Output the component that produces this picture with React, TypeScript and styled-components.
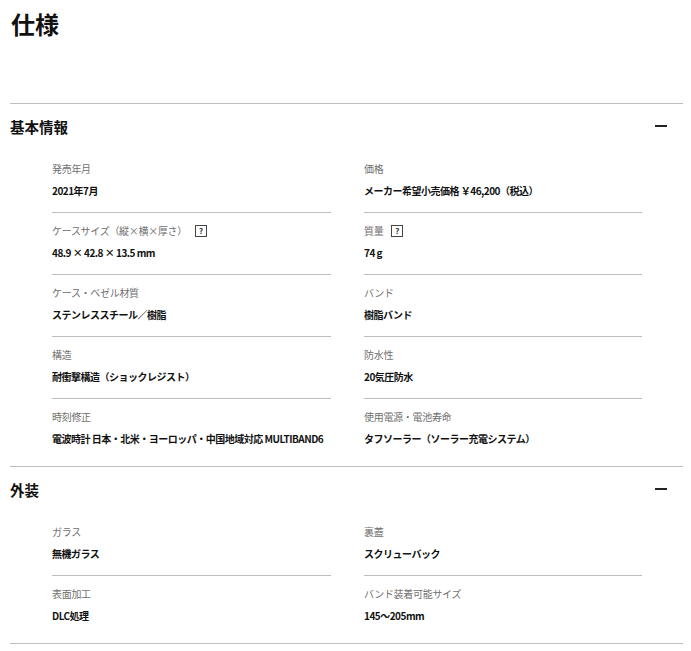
import React from "react";
import styled, { createGlobalStyle } from "styled-components";

const GlobalStyle = createGlobalStyle`
  html, body {
    margin: 0;
    padding: 0;
    background: #ffffff;
  }
  body {
    font-family: "Noto Sans CJK JP", "Noto Sans", sans-serif;
    color: #111;
  }
`;

const Page = styled.div`
  padding: 0 8px 0 10px;
`;

const Title = styled.h1`
  margin: 0 0 61px 1px;
  padding-top: 6px;
  font-size: 24px;
  line-height: 36px;
  font-weight: 700;
  color: #111;
`;

const Section = styled.section<{ $last?: boolean }>`
  border-top: 1px solid #bdbdbd;
  border-bottom: ${(p) => (p.$last ? "1px solid #bdbdbd" : "none")};
`;

const SectionHeader = styled.div`
  height: 47px;
  display: flex;
  align-items: center;
  justify-content: space-between;
  padding-right: 16px;
`;

const SectionTitle = styled.h2`
  margin: 0 0 2px;
  font-size: 14.5px;
  line-height: 20px;
  font-weight: 700;
  color: #111;
`;

const Minus = styled.span`
  display: block;
  width: 12px;
  height: 2px;
  margin-bottom: 3px;
  background: #222;
`;

const Grid = styled.div`
  display: grid;
  grid-template-columns: 279px 278px;
  column-gap: 33px;
  padding: 0 41px 5px 42px;
`;

const Item = styled.div<{ $last?: boolean }>`
  padding: 10px 0 13px;
  border-bottom: ${(p) => (p.$last ? "1px solid transparent" : "1px solid #bdbdbd")};
`;

const Label = styled.div`
  display: flex;
  align-items: center;
  font-size: 10px;
  line-height: 16px;
  letter-spacing: -0.3px;
  color: #707070;
`;

const Help = styled.span`
  display: inline-flex;
  align-items: center;
  justify-content: center;
  width: 10px;
  height: 10px;
  margin-left: 8px;
  border: 1px solid #444;
  font-size: 8px;
  line-height: 1;
  font-weight: 700;
  letter-spacing: 0;
  color: #333;
`;

const Value = styled.div`
  margin-top: 6px;
  font-size: 10px;
  line-height: 16px;
  font-weight: 700;
  letter-spacing: -0.5px;
  color: #111;
`;

type Spec = { label: string; value: string; help?: boolean };

const basic: Spec[] = [
  { label: "発売年月", value: "2021年7月" },
  { label: "価格", value: "メーカー希望小売価格 ￥46,200（税込）" },
  { label: "ケースサイズ（縦×横×厚さ）", value: "48.9 × 42.8 × 13.5 mm", help: true },
  { label: "質量", value: "74 g", help: true },
  { label: "ケース・ベゼル材質", value: "ステンレススチール／樹脂" },
  { label: "バンド", value: "樹脂バンド" },
  { label: "構造", value: "耐衝撃構造（ショックレジスト）" },
  { label: "防水性", value: "20気圧防水" },
  { label: "時刻修正", value: "電波時計 日本・北米・ヨーロッパ・中国地域対応 MULTIBAND6" },
  { label: "使用電源・電池寿命", value: "タフソーラー（ソーラー充電システム）" },
];

const exterior: Spec[] = [
  { label: "ガラス", value: "無機ガラス" },
  { label: "裏蓋", value: "スクリューバック" },
  { label: "表面加工", value: "DLC処理" },
  { label: "バンド装着可能サイズ", value: "145～205mm" },
];

function SpecSection({ title, specs, last }: { title: string; specs: Spec[]; last?: boolean }) {
  return (
    <Section $last={last}>
      <SectionHeader>
        <SectionTitle>{title}</SectionTitle>
        <Minus />
      </SectionHeader>
      <Grid>
        {specs.map((s, i) => (
          <Item key={s.label} $last={i >= specs.length - 2}>
            <Label>
              {s.label}
              {s.help && <Help>?</Help>}
            </Label>
            <Value>{s.value}</Value>
          </Item>
        ))}
      </Grid>
    </Section>
  );
}

export default function App() {
  return (
    <>
      <GlobalStyle />
      <Page>
        <Title>仕様</Title>
        <SpecSection title="基本情報" specs={basic} />
        <SpecSection title="外装" specs={exterior} last />
      </Page>
    </>
  );
}
